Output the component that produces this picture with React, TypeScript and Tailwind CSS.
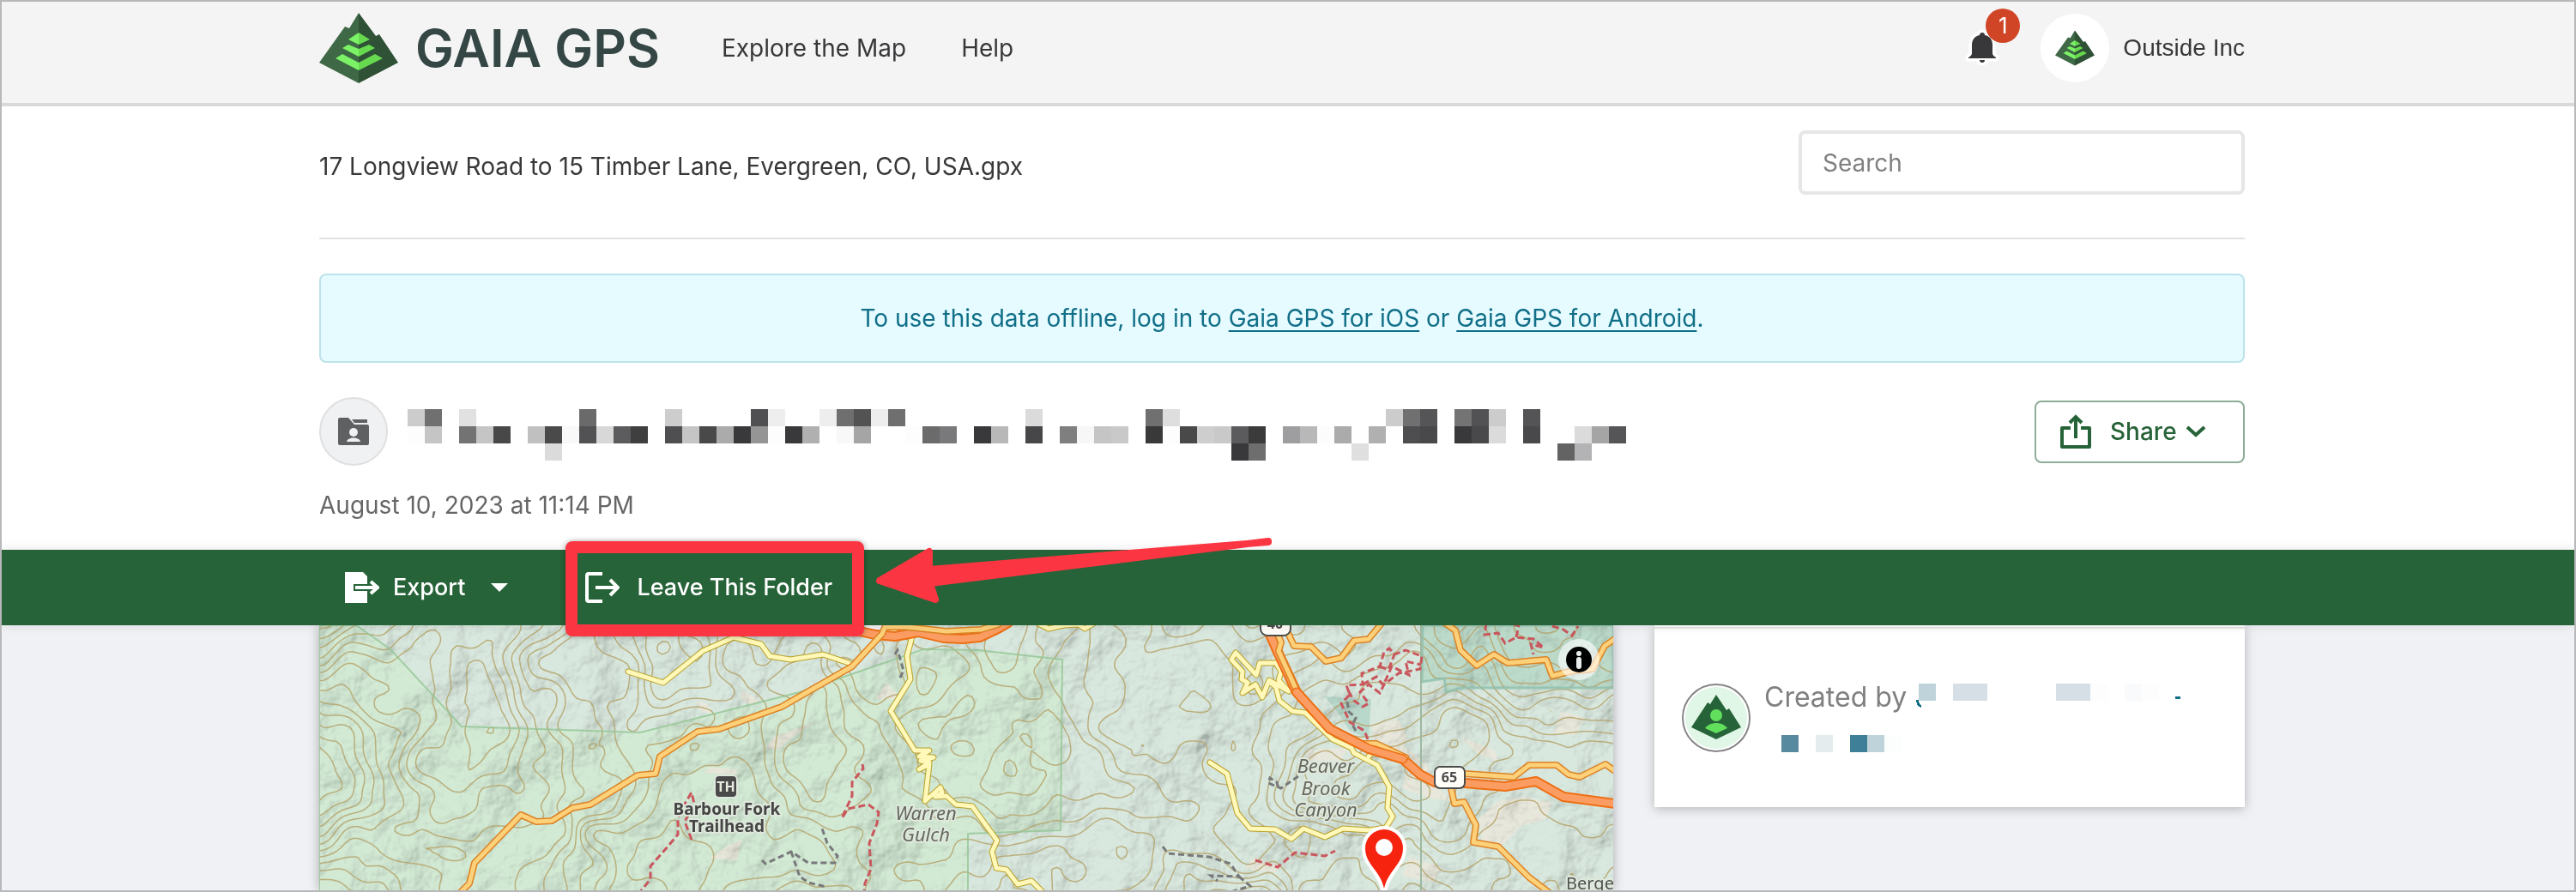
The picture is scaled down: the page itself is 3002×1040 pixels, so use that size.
import React from "react";

type Cell = [number, number, string];

const TITLE_CELLS: Cell[] = [
  [0, 0, "#cccccc"], [1, 0, "#707070"], [3, 0, "#e1e1e1"], [10, 0, "#6a6a6a"], [15, 0, "#cdcdcd"],
  [20, 0, "#504f51"], [21, 0, "#eeeeee"], [24, 0, "#eeeeee"], [25, 0, "#6f6f6f"], [26, 0, "#535353"],
  [27, 0, "#eeeeee"], [28, 0, "#6f6f6f"], [36, 0, "#dbdbdb"], [43, 0, "#707070"], [44, 0, "#dedede"],
  [57, 0, "#cccccc"], [58, 0, "#707070"], [59, 0, "#555456"], [61, 0, "#747474"], [62, 0, "#525254"],
  [63, 0, "#cccccc"], [65, 0, "#545355"],
  [0, 1, "#fdfdfd"], [1, 1, "#c5c5c5"], [3, 1, "#737373"], [4, 1, "#c5c5c5"], [5, 1, "#484849"],
  [7, 1, "#c0c0c0"], [8, 1, "#4a4a4b"], [9, 1, "#f8f8f8"], [10, 1, "#525153"], [11, 1, "#d8d8d8"],
  [12, 1, "#5c5b5d"], [13, 1, "#3f3f40"], [15, 1, "#4f4e50"], [16, 1, "#c5c5c5"], [17, 1, "#49494a"],
  [18, 1, "#ababab"], [19, 1, "#39383a"], [20, 1, "#959595"], [21, 1, "#fdfdfd"], [22, 1, "#39383a"],
  [23, 1, "#b0b0b0"], [25, 1, "#f8f8f8"], [26, 1, "#a5a5a5"], [29, 1, "#fdfdfd"], [30, 1, "#6b6b6b"],
  [31, 1, "#79797b"], [33, 1, "#39383a"], [34, 1, "#b8b8b8"], [36, 1, "#474749"], [38, 1, "#7f7f7f"],
  [39, 1, "#f7f7f7"], [40, 1, "#c5c5c5"], [41, 1, "#c9c9c9"], [43, 1, "#39393a"], [44, 1, "#fdfdfd"],
  [45, 1, "#49494a"], [46, 1, "#cecece"], [47, 1, "#c9c9c9"], [48, 1, "#5b5b5d"], [49, 1, "#3b3b3c"],
  [51, 1, "#9e9ea0"], [52, 1, "#b8b8b8"], [53, 1, "#fcfcfc"], [54, 1, "#ababab"], [56, 1, "#b0b0b0"],
  [58, 1, "#4e4e50"], [59, 1, "#49484a"], [61, 1, "#39383a"], [62, 1, "#49484a"], [63, 1, "#dbdbdb"],
  [65, 1, "#49484a"], [68, 1, "#dbdbdb"], [69, 1, "#a5a5a5"], [70, 1, "#555456"],
  [8, 2, "#dbdbdb"], [48, 2, "#39383a"], [49, 2, "#6e6e6e"], [55, 2, "#dfdfdf"], [67, 2, "#636363"],
  [68, 2, "#b3b2b4"],
];

const CREATOR_CELLS: Cell[] = [
  [9, 0, "#bed4da"], [11, 0, "#d5dfe5"], [12, 0, "#d5dfe5"], [17, 0, "#d5dfe5"], [18, 0, "#d5dfe5"],
  [19, 0, "#fdfdfe"], [21, 0, "#f8fafc"], [22, 0, "#fdfdfe"],
  [1, 3, "#578a9e"], [3, 3, "#e4eced"], [5, 3, "#3f7f98"], [6, 3, "#bed4da"], [7, 3, "#fbfefd"],
];

interface MosaicProps {
  cells: Cell[];
  cols: number;
  rows: number;
  className?: string;
  children?: React.ReactNode;
}

// Redacted text, drawn as a grid of 20px blocks
function Mosaic({ cells, cols, rows, className, children }: MosaicProps) {
  return (
    <svg width={cols * 20} height={rows * 20} shapeRendering="crispEdges" aria-hidden="true" className={className}>
      {cells.map(([col, row, fill]) => (
        <rect key={`${col}-${row}`} x={col * 20} y={row * 20} width="20" height="20" fill={fill} />
      ))}
      {children}
    </svg>
  );
}

function GaiaMark({ className }: { className?: string }) {
  return (
    <svg viewBox="0 0 92 82" className={className} aria-hidden="true">
      <path d="M46 0 35 18 30 16 0 58 46 82Z" fill="#3f6847" />
      <path d="M46 0 66 27 70 25 92 58 46 82Z" fill="#2f5136" />
      <path d="M46 23 34 31 46 37ZM34 37 27 41 46 51V42ZM27 48 19 53 46 67V58Z" fill="#7cf266" />
      <path d="M46 23 59 31 46 37ZM58 37 65 41 46 51V42ZM65 48 74 53 46 67V58Z" fill="#67d94f" />
    </svg>
  );
}

function BellIcon() {
  return (
    <svg viewBox="-4 -4 40 44" className="h-11 w-10" aria-hidden="true">
      <path
        d="M16 0c-2 0-3 1-3 3C7 4 4 9 4 14v10c0 2-1 3-4 5v1h32v-1c-3-2-4-3-4-5V14c0-5-3-10-9-11 0-2-1-3-3-3ZM13 32c0 2 1 3 3 3s3-1 3-3Z"
        fill="#38383a"
        stroke="#fff"
        strokeWidth="7"
        strokeLinejoin="round"
        paintOrder="stroke"
      />
    </svg>
  );
}

function FolderIcon() {
  return (
    <svg viewBox="0 0 36 32" className="h-8 w-9" aria-hidden="true">
      <path d="M2 0h10l7 8h15q2 0 2 2v20q0 2-2 2H2q-2 0-2-2V2q0-2 2-2Z" fill="#5f6062" />
      <path d="M16 2h18v4H19Z" fill="#5f6062" />
      <circle cx="18" cy="17" r="5" fill="#f0f1f3" />
      <path d="M10 28c1-6 15-6 16 0Z" fill="#f0f1f3" />
    </svg>
  );
}

function ShareIcon() {
  return (
    <svg viewBox="0 0 36 40" className="h-10 w-9" fill="none" stroke="#276338" strokeWidth="4" aria-hidden="true">
      <path d="M12 16H2v22h32V16H24" strokeLinejoin="round" />
      <path d="M18 28V3M11 10l7-7 7 7" />
    </svg>
  );
}

function ExportIcon() {
  return (
    <svg viewBox="0 0 40 36" className="h-9 w-10" aria-hidden="true">
      <path d="M0 0h21l5 5v9H10v8h16v14H0Z" fill="#fff" />
      <path d="M12 18h26M30 11l8 7-8 7" fill="none" stroke="#fff" strokeWidth="4" />
    </svg>
  );
}

function LeaveIcon() {
  return (
    <svg viewBox="0 0 40 36" className="h-9 w-10" fill="none" stroke="#fff" strokeWidth="4" aria-hidden="true">
      <path d="M20 2H4Q2 2 2 4v28q0 2 2 2h16" />
      <path d="M12 18h26M29 9l9 9-9 9" />
    </svg>
  );
}

function CreatorIcon() {
  return (
    <svg viewBox="0 0 80 80" className="size-20 shrink-0" aria-hidden="true">
      <circle cx="40" cy="40" r="39" fill="#fff" stroke="#868686" strokeWidth="2" />
      <circle cx="40" cy="40" r="36" fill="#e0f6e6" />
      <path d="M40 13 33 24 30 22 11 51 40 65 69 51 55 29 52 31Z" fill="#276338" />
      <circle cx="40" cy="37" r="7" fill="#62df5d" />
      <path d="M27 52c6-8 20-8 26 0L40 58Z" fill="#62df5d" />
    </svg>
  );
}

const MAP_W = 1508;
const MAP_H = 311;

function hash(x: number, y: number) {
  const n = Math.sin(x * 127.1 + y * 311.7) * 43758.5453;
  return n - Math.floor(n);
}

function noise(x: number, y: number) {
  const xi = Math.floor(x);
  const yi = Math.floor(y);
  const u = (x - xi) * (x - xi) * (3 - 2 * (x - xi));
  const v = (y - yi) * (y - yi) * (3 - 2 * (y - yi));
  const top = hash(xi, yi) * (1 - u) + hash(xi + 1, yi) * u;
  const bottom = hash(xi, yi + 1) * (1 - u) + hash(xi + 1, yi + 1) * u;
  return top * (1 - v) + bottom * v;
}

function elevation(x: number, y: number) {
  // Bend the sample point so ridges and gullies wander
  const wx = x + noise(x / 40 + 3, y / 40) * 40;
  const wy = y + noise(x / 40, y / 40 + 7) * 40;
  return noise(wx / 210, wy / 180) * 15 + noise(wx / 74 + 9, wy / 70) * 4 + noise(x / 26, y / 24 + 5);
}

// Marching squares over the elevation grid, one path for all contour levels
function traceContours(step: number) {
  const out: string[] = [];
  for (let y = 0; y < MAP_H; y += step) {
    for (let x = 0; x < MAP_W; x += step) {
      const pts = [[x, y], [x + step, y], [x + step, y + step], [x, y + step]];
      const h = pts.map(([px, py]) => elevation(px, py));
      const high = Math.max(...h);
      for (let level = Math.ceil(Math.min(...h)); level < high; level++) {
        const cross: string[] = [];
        for (let i = 0; i < 4; i++) {
          const j = (i + 1) % 4;
          if (h[i] < level !== h[j] < level) {
            const t = (level - h[i]) / (h[j] - h[i]);
            const cx = pts[i][0] + (pts[j][0] - pts[i][0]) * t;
            const cy = pts[i][1] + (pts[j][1] - pts[i][1]) * t;
            cross.push(`${cx.toFixed(1)} ${cy.toFixed(1)}`);
          }
        }
        for (let i = 0; i + 1 < cross.length; i += 2) {
          out.push(`M${cross[i]}L${cross[i + 1]}`);
        }
      }
    }
  }
  return out.join("");
}

const CONTOURS = traceContours(5);

const FOREST = "M0 0H43L83 28 166 118 374 125 560 78 704 28 768 29 866 40 864 239 756 243V311H0Z";
const PARK = "M1286 0 1285 66 1311 62 1313 78 1333 73H1508V0Z";
const SMALL_PARK = "M1172 83 1226 86 1223 133 1201 123 1188 103Z";

const MINOR_ROADS = [
  "M360 54 401 67 447 30 483 14 515 22 525 36 549 40 587 34 617 44",
  "M691 13 685 36 689 63 666 100 694 146 711 146 699 153 716 154 701 158 711 160 699 168 711 162 706 205 724 189 726 195 718 200 731 199 742 209 761 211 790 251 784 264 789 283 801 285 814 302 830 298 843 311",
  "M838 -2 850 4 868 0 885 -1 892 4 904 -3",
  "M1115 44 1096 44 1092 58 1068 32 1063 40 1076 54 1075 63 1082 67 1076 79 1091 69 1099 84 1107 64 1130 77 1118 64 1121 54 1115 44",
  "M1107 66 1115 72 1119 88 1134 100 1149 102 1181 133 1203 143 1206 149 1233 163 1247 188 1245 213 1251 223 1243 236 1223 239 1193 237 1172 247 1147 237 1133 249 1114 238 1085 237 1070 219 1058 173 1038 160",
  "M1229 144 1223 153",
  "M660 5 685 5 685 -2",
];

const SECONDARY_ROADS = [
  "M165 311 175 301 181 277 235 221 253 229 271 228 295 213 316 209 371 175 392 173 397 153 441 124 466 121 539 95 621 48 656 10 661 -2",
  "M660 2 685 2 731 7 771 5 791 -1",
  "M1129 9 1136 24 1156 25 1173 42 1191 38 1206 18 1223 16 1238 -2",
  "M1313 -2 1324 6 1330 29 1349 47 1369 34 1385 44 1430 40 1437 59 1457 54 1484 51 1498 24 1510 16",
  "M1335 173 1392 177 1410 163 1442 163 1456 174 1469 177 1499 162 1510 170",
  "M1319 190 1323 208 1334 206 1348 233 1345 253 1374 258 1410 294 1435 313",
  "M1116 8 1121 20 1118 30 1140 78",
  "M1219 138 1232 138 1266 154",
];

const HIGHWAYS = [
  "M630 7 648 11 671 13 698 8 728 15 750 16 770 14 791 4 803 -3",
  "M1106 6 1116 29 1139 78 1178 121 1223 144 1263 156 1283 174 1300 183 1335 184 1382 188 1418 182 1450 200 1510 208",
];

const TRAILS = [
  "M633 162 634 167 621 183 621 199 609 225 616 214 640 209 652 218 650 231 641 254 643 284 636 301 635 311",
  "M434 250 426 229 437 208 434 195 426 208 418 224 418 244 401 264 386 281 386 296 374 311",
  "M1091 274 1117 282 1137 265 1172 269 1184 263",
  "M1360 -2 1358 11 1374 9 1382 21 1395 14 1415 16 1427 26 1412 22 1415 34M1395 14 1398 0 1390 0M1437 1 1450 5 1460 12 1467 1",
  "M1222 133 1218 123 1201 113 1191 91 1201 81 1197 70 1216 69 1215 56 1236 48 1241 31 1247 27 1253 34 1266 29 1285 36 1283 51 1258 56 1241 69 1236 79 1223 69 1213 78 1223 91 1216 95 1206 88 1200 78",
  "M1216 69 1232 60 1240 70 1250 48 1270 58 1266 42 1284 46M1236 48 1246 52 1253 34",
];

const TRACKS = [
  "M983 258 989 266 1037 270 1062 278 1072 293 1039 292 1047 298M1072 293 1085 304 1062 311",
  "M1141 176 1121 190 1106 184 1108 178 1116 183 1118 190",
  "M516 274 520 278 550 264 570 277 601 277 604 269 592 254 586 237M550 264 560 293 570 300 587 304 588 311",
  "M671 34 674 29 681 53 676 63",
  "M1198 89 1200 101 1208 108 1204 116 1208 123",
];

const CLEARINGS = [
  "M439 88 444 100 460 104 452 92ZM492 75 514 88 504 94 492 86Z",
  "M520 144 530 130 580 112 560 124 536 144Z",
  "M448 172 455 165 486 168 487 174Z",
  "M454 272 478 256 492 250 487 274Z",
  "M648 86 661 67 674 80 670 87Z",
  "M1150 146 1200 142 1190 158 1152 158Z",
  "M1226 116 1258 110 1268 130 1264 142 1290 160 1300 186 1322 206 1296 202 1262 190 1270 160 1232 150Z",
  "M1355 250 1352 226 1372 206 1400 200 1436 206 1430 226 1400 234 1376 260Z",
  "M1448 100 1474 108 1464 128 1438 126Z",
  "M1330 130 1370 146 1374 158 1350 150Z",
  "M1078 284 1090 270 1124 282 1114 288Z",
  "M1270 270 1308 282 1300 300 1262 292Z",
];

function ParkMap() {
  return (
    <svg
      viewBox={`0 0 ${MAP_W} ${MAP_H}`}
      preserveAspectRatio="xMinYMin slice"
      className="absolute inset-0 size-full"
      role="img"
      aria-label="Topographic map"
    >
      <defs>
        <filter id="hillshade" x="0" y="0" width="100%" height="100%">
          <feTurbulence type="fractalNoise" baseFrequency="0.012" numOctaves="5" seed="4" />
          <feDiffuseLighting surfaceScale="28" diffuseConstant="1.1" lightingColor="#ffffff">
            <feDistantLight azimuth="225" elevation="55" />
          </feDiffuseLighting>
        </filter>
      </defs>
      <rect width={MAP_W} height={MAP_H} fill="#d9e8de" />
      <path d={FOREST} fill="#d2e9d4" />
      <path d={PARK} fill="#bddbcb" />
      <path d={SMALL_PARK} fill="#b9d8cc" />
      {CLEARINGS.map((d) => (
        <path key={d} d={d} fill="#ebe6da" fillOpacity="0.8" />
      ))}
      <rect width={MAP_W} height={MAP_H} filter="url(#hillshade)" opacity="0.25" className="mix-blend-multiply" />
      <path d={CONTOURS} fill="none" stroke="#b5a56c" strokeWidth="1.5" strokeLinecap="round" opacity="0.85" />
      <path d={FOREST} fill="none" stroke="#93c695" strokeWidth="2" opacity="0.8" />
      <path d={PARK} fill="none" stroke="#8fc1ae" strokeWidth="3" opacity="0.8" />
      <path d="M1284 0V311" stroke="#9fb8a0" strokeWidth="2" />
      <path d="M636 0H660V6L636 5Z" fill="#f2f1f4" />

      <g fill="none" stroke="#77797b" strokeWidth="3" strokeDasharray="7 4">
        {TRACKS.map((d) => <path key={d} d={d} />)}
      </g>
      <g fill="none" stroke="#c9575d" strokeWidth="3" strokeDasharray="8 4">
        {TRAILS.map((d) => <path key={d} d={d} />)}
      </g>
      <g fill="none" strokeLinejoin="round" strokeLinecap="round">
        {MINOR_ROADS.map((d) => <path key={d} d={d} stroke="#b8a02a" strokeWidth="7" />)}
        {MINOR_ROADS.map((d) => <path key={d} d={d} stroke="#fff8b8" strokeWidth="5" />)}
        {HIGHWAYS.map((d) => <path key={d} d={d} stroke="#ee6f14" strokeWidth="12" />)}
        {HIGHWAYS.map((d) => <path key={d} d={d} stroke="#fb9d62" strokeWidth="8" />)}
        {SECONDARY_ROADS.map((d) => <path key={d} d={d} stroke="#dc8324" strokeWidth="8" />)}
        {SECONDARY_ROADS.map((d) => <path key={d} d={d} stroke="#fdd07a" strokeWidth="5" />)}
        <path d="M1139 78 1178 121 1223 144 1263 156" stroke="#ee6f14" strokeWidth="11" />
        <path d="M1139 78 1178 121 1223 144 1263 156" stroke="#fb9d62" strokeWidth="8" />
      </g>

      {/* Route shields */}
      <g className="font-['Noto_Sans',sans-serif] text-[16px] font-bold" textAnchor="middle" fill="#4a4a4a">
        <rect x="1097" y="-14" width="35" height="26" rx="8" fill="#fffdf8" stroke="#4c4c4c" strokeWidth="2" />
        <text x="1114" y="4">40</text>
        <rect x="1300" y="165" width="35" height="25" rx="6" fill="#fffdf8" stroke="#4c4c4c" strokeWidth="2" />
        <text x="1317" y="183">65</text>
      </g>

      {/* Place labels */}
      <g
        className="font-['Noto_Sans',sans-serif]"
        textAnchor="middle"
        stroke="#dfe8dc"
        strokeWidth="4"
        strokeLinejoin="round"
        paintOrder="stroke"
      >
        <rect x="462" y="176" width="24" height="24" rx="4" fill="#4a4a4a" />
        <text x="474" y="194" className="text-[16px] font-bold" fill="#e8ecdf" stroke="none">TH</text>
        <g className="text-[19px] font-bold" fill="#454545">
          <text x="475" y="221">Barbour Fork</text>
          <text x="475" y="241">Trailhead</text>
        </g>
        <g className="text-[22px] italic" fill="#66685f">
          <text x="707" y="227">Warren</text>
          <text x="707" y="252">Gulch</text>
          <text x="1173" y="172">Beaver</text>
          <text x="1173" y="198">Brook</text>
          <text x="1173" y="223">Canyon</text>
        </g>
        <text x="1453" y="308" className="text-[20px]" textAnchor="start" fill="#4f524d">Berge</text>
      </g>

      <path
        d="M1241 307C1236 285 1219 279 1219 260a22 22 0 0 1 44 0C1263 279 1246 285 1241 307Z"
        fill="#f6230f"
        stroke="#fff"
        strokeWidth="8"
        strokeLinejoin="round"
        paintOrder="stroke"
      />
      <circle cx="1241" cy="259" r="10" fill="#fff" />
    </svg>
  );
}

export default function App() {
  return (
    <div className="flex min-h-screen flex-col overflow-hidden border-2 border-[#b7b8ba] bg-white font-[Inter,sans-serif] text-[28px] leading-10 text-[#38383a]">
      <header className="border-b-4 border-[#d8d8d8] bg-[#f4f4f4] pr-3.5">
        <div className="mx-auto flex h-[118px] max-w-[2244px] items-center pb-2.5">
          <a href="#" className="flex items-center gap-5 text-[60px] font-semibold text-[#344744]">
            <GaiaMark className="h-[82px] w-[92px]" />
            GAIA GPS
          </a>
          <nav className="ml-[72px] flex gap-16">
            <a href="#">Explore the Map</a>
            <a href="#">Help</a>
          </nav>
          <div className="ml-auto flex items-center">
            <button type="button" aria-label="Notifications" className="relative mr-12">
              <BellIcon />
              <span className="absolute -top-6 left-6 flex size-10 items-center justify-center rounded-full bg-[#d04526] text-[26px] text-white">
                1
              </span>
            </button>
            <a href="#" className="flex items-center gap-4 font-['Liberation_Sans',sans-serif]">
              <span className="flex size-20 items-center justify-center rounded-full bg-white">
                <GaiaMark className="h-[42px] w-[46px]" />
              </span>
              Outside Inc
            </a>
          </div>
        </div>
      </header>

      <main className="flex flex-1 flex-col">
        <section className="pr-3.5">
          <div className="mx-auto max-w-[2244px] pt-7 pb-8">
            <div className="flex items-center justify-between border-b-2 border-[#e2e2e2] pb-[50px]">
              <h1 className="pt-2">17 Longview Road to 15 Timber Lane, Evergreen, CO, USA.gpx</h1>
              <input
                type="search"
                aria-label="Search"
                placeholder="Search"
                className="h-[75px] w-[520px] rounded-lg border-4 border-[#e6e6e6] bg-white px-6 placeholder:text-[#808080]"
              />
            </div>

            <p className="mt-10 rounded-lg border-2 border-[#bde2ea] bg-[#e5fbff] py-[30px] text-center text-[#116f88]">
              To use this data offline, log in to{" "}
              <a href="#" className="underline decoration-2 underline-offset-4">Gaia GPS for iOS</a> or{" "}
              <a href="#" className="underline decoration-2 underline-offset-4">Gaia GPS for Android</a>.
            </p>

            <div className="mt-10 flex h-20 items-center">
              <span className="mr-[23px] flex size-20 items-center justify-center rounded-full border-2 border-[#e0e0e0] bg-[#f0f1f3]">
                <FolderIcon />
              </span>
              <Mosaic cells={TITLE_CELLS} cols={71} rows={3} className="mt-2 shrink-0" />
              <button
                type="button"
                className="ml-auto flex h-[73px] w-[245px] items-center rounded-lg border-2 border-[#8fac97] pl-7 font-medium text-[#276338]"
              >
                <ShareIcon />
                <span className="ml-[22px]">Share</span>
                <svg viewBox="0 0 24 14" className="ml-2.5 h-3.5 w-6" aria-hidden="true">
                  <path d="m2 2 10 9 10-9" fill="none" stroke="#276338" strokeWidth="4" />
                </svg>
              </button>
            </div>

            <p className="mt-[26px] text-[#666666]">August 10, 2023 at 11:14 PM</p>
          </div>
        </section>

        <div className="relative z-10 bg-[#276338] pr-3.5 shadow-[0_0_12px_rgba(0,0,0,0.1)]">
          <div className="mx-auto flex h-[88px] max-w-[2244px] items-center pl-[30px] text-[27px] font-medium text-white">
            <button type="button" className="flex items-center">
              <ExportIcon />
              <span className="ml-4">Export</span>
              <svg viewBox="0 0 20 10" className="ml-[30px] h-2.5 w-5" aria-hidden="true">
                <path d="M0 0h20L10 10Z" fill="#fff" />
              </svg>
            </button>
            <button type="button" className="relative ml-[90px] flex items-center">
              <LeaveIcon />
              <span className="ml-5">Leave This Folder</span>
              {/* Callout: frame and arrow */}
              <span className="absolute -top-[34px] -left-[23px] h-[111px] w-[348px] rounded-lg border-[14px] border-[#fb3541] shadow-[0_0_6px_rgba(0,0,0,0.35)]" />
              <svg viewBox="0 0 470 84" className="absolute -top-[42px] left-[335px] h-[84px] w-[470px]" aria-hidden="true">
                <path
                  d="M8 54 66 20V41L461 9V8L67 57 73 76Z"
                  fill="#fb3541"
                  stroke="#fb3541"
                  strokeWidth="8"
                  strokeLinejoin="round"
                />
              </svg>
            </button>
          </div>
        </div>

        <section className="flex flex-1 flex-col bg-[#f0f1f4] pr-3.5">
          <div className="mx-auto flex w-full max-w-[2244px] flex-1 items-stretch gap-12">
            <div className="relative min-h-[309px] flex-1 overflow-hidden shadow-[0_0_12px_rgba(0,0,0,0.3)]">
              <ParkMap />
              <button
                type="button"
                aria-label="Map attribution"
                className="absolute top-4 right-4 flex size-12 items-center justify-center rounded-full bg-white/60"
              >
                <svg viewBox="0 0 30 30" className="size-[30px]" aria-hidden="true">
                  <circle cx="15" cy="15" r="15" fill="#000" />
                  <circle cx="15" cy="8" r="3" fill="#e8ecea" />
                  <path d="M15 15v8" stroke="#e8ecea" strokeWidth="6" strokeLinecap="round" />
                </svg>
              </button>
            </div>

            <aside className="h-[212px] w-[688px] bg-white pt-0.5 shadow-[0_2px_12px_rgba(0,0,0,0.25)]">
              <div className="flex border-t-2 border-[#e5e5e5] px-8 pt-16">
                <CreatorIcon />
                <div className="relative ml-4">
                  <span className="block text-[32px] leading-8 text-[#808080]">Created by</span>
                  <span className="absolute top-0 left-0">
                    <Mosaic cells={CREATOR_CELLS} cols={25} rows={4}>
                      <path d="M177 19h3q0 5 3 6v3q-6-2-6-9ZM479 15h6v3h-6Z" fill="#116f88" />
                    </Mosaic>
                  </span>
                </div>
              </div>
            </aside>
          </div>
        </section>
      </main>
    </div>
  );
}
